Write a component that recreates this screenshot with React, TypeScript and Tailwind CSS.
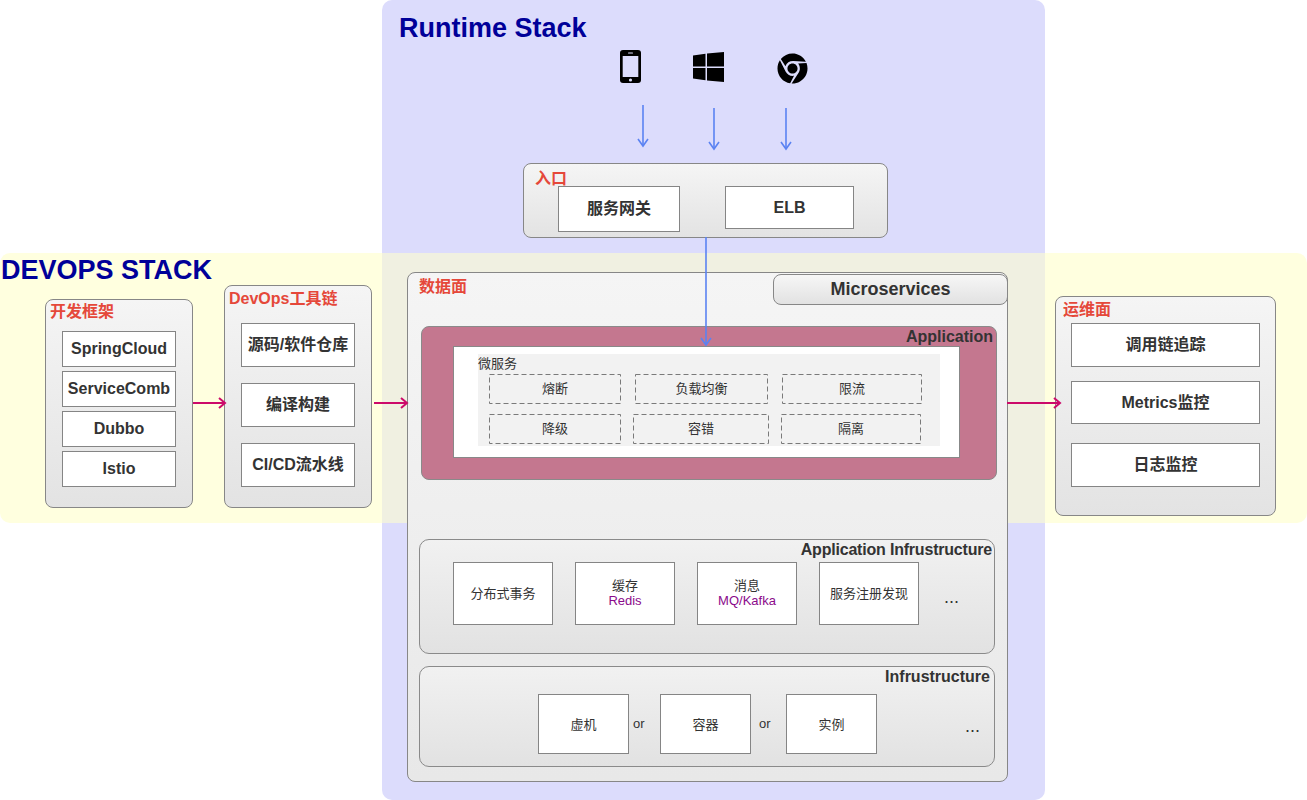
import React from "react";
import { FaChrome } from "react-icons/fa";

// shared looks
const group =
  "absolute rounded-[8px] border border-[#878787] bg-linear-to-b from-[#f5f5f5] to-[#e3e3e3]";
const cell =
  "flex items-center justify-center border border-[#858585] bg-white text-[16px] font-bold leading-none text-[#333]";
const smallCell =
  "flex flex-col items-center justify-center border border-[#858585] bg-white text-[13px] leading-[15px] text-[#333]";
const redLabel = "absolute text-[16px] font-bold leading-none text-[#e5483a]";

function PhoneIcon() {
  return (
    <svg width="21" height="33" viewBox="0 0 21 33">
      <rect x="0" y="0" width="21" height="33" rx="3" fill="#000" />
      <rect x="2.7" y="6" width="15.6" height="21" fill="#dcdcfc" />
      <rect x="8" y="2.6" width="5" height="1" rx="0.5" fill="#dcdcfc" />
      <circle cx="10.5" cy="30" r="1.6" fill="#dcdcfc" />
    </svg>
  );
}

function WindowsIcon() {
  return (
    <svg width="31" height="30" viewBox="0 0 31 30">
      <polygon points="0,3.5 12.5,1.8 12.5,14.5 0,14.5" fill="#000" />
      <polygon points="14,1.6 31,0 31,14.5 14,14.5" fill="#000" />
      <polygon points="0,16 12.5,16 12.5,28.2 0,26.5" fill="#000" />
      <polygon points="14,16 31,16 31,30 14,28.4" fill="#000" />
    </svg>
  );
}

// dashed cell with the long dashes of the drawing
function DashedCell({ label, width, w }: { label: string; width: number; w: string }) {
  return (
    <div className={`relative flex h-[30px] items-center justify-center text-[13px] text-[#333] ${w}`}>
      <svg className="absolute left-0 top-0" width={width} height="30">
        <rect
          x="0.5"
          y="0.5"
          width={width - 1}
          height="29"
          fill="none"
          stroke="#7a7a7a"
          strokeDasharray="5 3"
        />
      </svg>
      <span className="relative">{label}</span>
    </div>
  );
}

// connectors between the blocks
function Connectors() {
  const blue = "#5b83f2";
  const pink = "#cc0a6a";
  const down = (x: number, y1: number, y2: number) => (
    <g key={`d${x}${y1}`} stroke={blue} strokeWidth="1.6" fill="none">
      <line x1={x} y1={y1} x2={x} y2={y2} />
      <polyline points={`${x - 5},${y2 - 7} ${x},${y2} ${x + 5},${y2 - 7}`} />
    </g>
  );
  const right = (x1: number, x2: number, y: number) => (
    <g key={`r${x1}`} stroke={pink} strokeWidth="2" fill="none">
      <line x1={x1} y1={y} x2={x2} y2={y} />
      <polyline points={`${x2 - 6},${y - 5} ${x2},${y} ${x2 - 6},${y + 5}`} />
    </g>
  );
  return (
    <svg
      className="pointer-events-none absolute left-0 top-0"
      width="1307"
      height="800"
      viewBox="0 0 1307 800"
    >
      {down(643, 105, 146)}
      {down(714, 108, 149)}
      {down(786, 108, 149)}
      {down(706, 237, 345)}
      {right(193, 225, 403)}
      {right(374, 407, 403)}
      {right(1007, 1060, 403)}
    </svg>
  );
}

export default function App() {
  const rowOne = [
    { label: "熔断", width: 132, w: "w-[132px]" },
    { label: "负载均衡", width: 133, w: "w-[133px]" },
    { label: "限流", width: 140, w: "w-[140px]" },
  ];
  const rowTwo = [
    { label: "降级", width: 132, w: "w-[132px]" },
    { label: "容错", width: 136, w: "w-[136px]" },
    { label: "隔离", width: 140, w: "w-[140px]" },
  ];

  return (
    <div className="relative h-[800px] w-[1307px] overflow-hidden bg-white font-['Liberation_Sans','Noto_Sans_CJK_SC',sans-serif]">
      {/* background regions */}
      <div className="absolute left-[382px] top-0 h-[800px] w-[663px] rounded-[10px] bg-[#dcdcfc]" />
      <div className="absolute left-0 top-[253px] flex h-[270px] w-[1307px] overflow-hidden rounded-[10px]">
        <div className="w-[382px] bg-[#ffffdf]" />
        <div className="w-[663px] bg-[#f0f0e1]" />
        <div className="flex-1 bg-[#ffffdf]" />
      </div>

      <div className="absolute left-[399px] top-[15px] text-[27px] font-bold leading-none text-[#000099]">
        Runtime Stack
      </div>
      <div className="absolute left-[1px] top-[257px] text-[27px] font-bold leading-none text-[#000099]">
        DEVOPS STACK
      </div>

      {/* clients */}
      <div className="absolute left-[620px] top-[50px] flex items-start">
        <PhoneIcon />
        <div className="ml-[52px] mt-[2px]">
          <WindowsIcon />
        </div>
        <div className="ml-[53px] mt-[3px]">
          <FaChrome size={31} color="#000" />
        </div>
      </div>

      {/* 入口 */}
      <div className={`${group} left-[523px] top-[163px] h-[75px] w-[365px]`}>
        <div className={`${redLabel} left-[11px] top-[7px]`}>入口</div>
        <div className="flex items-start gap-[45px] pl-[34px] pt-[22px]">
          <div className={`${cell} h-[46px] w-[122px]`}>服务网关</div>
          <div className={`${cell} h-[43px] w-[129px]`}>ELB</div>
        </div>
      </div>

      {/* 开发框架 */}
      <div className={`${group} left-[45px] top-[299px] h-[209px] w-[148px]`}>
        <div className={`${redLabel} left-[4px] top-[4px]`}>开发框架</div>
        <div className="flex flex-col gap-[4px] pl-[16px] pt-[31px]">
          {["SpringCloud", "ServiceComb", "Dubbo", "Istio"].map((t) => (
            <div key={t} className={`${cell} h-[36px] w-[114px]`}>
              {t}
            </div>
          ))}
        </div>
      </div>

      {/* DevOps工具链 */}
      <div className={`${group} left-[224px] top-[285px] h-[223px] w-[148px]`}>
        <div className={`${redLabel} left-[4px] top-[5px]`}>DevOps工具链</div>
        <div className="flex flex-col gap-[16px] pl-[16px] pt-[37px]">
          {["源码/软件仓库", "编译构建", "CI/CD流水线"].map((t) => (
            <div key={t} className={`${cell} h-[44px] w-[114px]`}>
              {t}
            </div>
          ))}
        </div>
      </div>

      {/* 数据面 */}
      <div className={`${group} left-[407px] top-[272px] h-[510px] w-[601px] from-[#f2f2f2] to-[#e8e8e8]`}>
        <div className={`${redLabel} left-[11px] top-[6px]`}>数据面</div>
        <div className="absolute right-[-1px] top-[1px] flex h-[31px] w-[235px] items-center justify-center rounded-[8px] border border-[#878787] bg-linear-to-b from-[#f6f6f6] to-[#e2e2e2] text-[18px] font-bold text-[#333]">
          Microservices
        </div>

        <div className="flex flex-col pl-[11px] pt-[53px]">
          {/* Application */}
          <div className="relative ml-[2px] h-[154px] w-[576px] rounded-[8px] border border-[#8a8a8a] bg-[#c4778f]">
            <div className="absolute right-[3px] top-[2px] text-[16px] font-bold leading-none text-[#333]">
              Application
            </div>
            <div className="ml-[31px] mt-[19px] h-[112px] w-[507px] border border-[#888] bg-white pl-[24px] pt-[7px]">
              <div className="relative h-[92px] w-[462px] bg-[#f2f2f2] pl-[11px] pt-[20px]">
                <div className="absolute left-0 top-[3px] text-[13px] leading-none text-[#333]">微服务</div>
                <div className="flex gap-[14px]">
                  {rowOne.map((d) => (
                    <DashedCell key={d.label} label={d.label} width={d.width} w={d.w} />
                  ))}
                </div>
                <div className="mt-[10px] flex gap-[12px]">
                  {rowTwo.map((d) => (
                    <DashedCell key={d.label} label={d.label} width={d.width} w={d.w} />
                  ))}
                </div>
              </div>
            </div>
          </div>

          {/* Application Infrustructure */}
          <div className="relative mt-[59px] h-[115px] w-[576px] rounded-[10px] border border-[#8a8a8a] bg-linear-to-b from-[#f1f1f1] to-[#e2e2e2]">
            <div className="absolute right-[2px] top-[2px] text-[16px] font-bold leading-none tracking-[-0.2px] text-[#333]">
              Application Infrustructure
            </div>
            <div className="flex items-start gap-[22px] pl-[33px] pt-[22px]">
              <div className={`${smallCell} h-[63px] w-[100px]`}>分布式事务</div>
              <div className={`${smallCell} h-[63px] w-[100px] pb-[2px]`}>
                <span>缓存</span>
                <span className="text-[#8b0a8b]">Redis</span>
              </div>
              <div className={`${smallCell} h-[63px] w-[100px] pb-[2px]`}>
                <span>消息</span>
                <span className="text-[#8b0a8b]">MQ/Kafka</span>
              </div>
              <div className={`${smallCell} h-[63px] w-[100px]`}>服务注册发现</div>
              <div className="ml-[3px] mt-[26px] text-[18px] leading-none text-[#333]">...</div>
            </div>
          </div>

          {/* Infrustructure */}
          <div className="relative mt-[12px] h-[101px] w-[576px] rounded-[10px] border border-[#8a8a8a] bg-linear-to-b from-[#f1f1f1] to-[#e2e2e2]">
            <div className="absolute right-[4px] top-[2px] text-[16px] font-bold leading-none text-[#333]">
              Infrustructure
            </div>
            <div className="flex items-start pl-[118px] pt-[27px]">
              <div className={`${smallCell} h-[60px] w-[91px]`}>虚机</div>
              <div className="flex h-[60px] w-[31px] items-center pl-[4px] text-[13px] text-[#333]">or</div>
              <div className={`${smallCell} h-[60px] w-[91px]`}>容器</div>
              <div className="flex h-[60px] w-[35px] items-center pl-[8px] text-[13px] text-[#333]">or</div>
              <div className={`${smallCell} h-[60px] w-[91px]`}>实例</div>
              <div className="ml-[88px] mt-[23px] text-[18px] leading-none text-[#333]">...</div>
            </div>
          </div>
        </div>
      </div>

      {/* 运维面 */}
      <div className={`${group} left-[1055px] top-[296px] h-[220px] w-[221px]`}>
        <div className={`${redLabel} left-[7px] top-[5px]`}>运维面</div>
        <div className="flex flex-col pl-[15px] pt-[26px]">
          <div className={`${cell} h-[44px] w-[189px]`}>调用链追踪</div>
          <div className={`${cell} mt-[14px] h-[43px] w-[189px]`}>Metrics监控</div>
          <div className={`${cell} mt-[19px] h-[44px] w-[189px]`}>日志监控</div>
        </div>
      </div>

      <Connectors />
    </div>
  );
}
